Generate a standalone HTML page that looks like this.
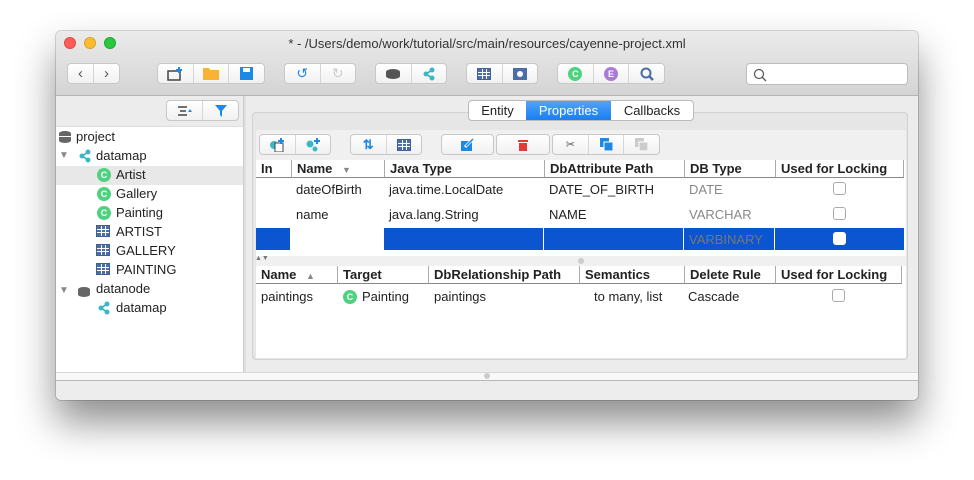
<!DOCTYPE html>
<html><head><style>
*{box-sizing:border-box;margin:0;padding:0}
body{width:974px;height:480px;background:#fff;position:relative;overflow:hidden;font-family:"Liberation Sans",sans-serif;font-size:13px;color:#222}
.a{position:absolute}
#win{left:56px;top:31px;width:862px;height:369px;border-radius:5px;overflow:hidden;background:#ececec;box-shadow:0 22px 40px rgba(0,0,0,.45),0 0 0 1px rgba(0,0,0,.15)}
#tb{left:0;top:0;width:862px;height:65px;background:linear-gradient(#ebebeb,#d4d4d4);border-bottom:1px solid #b5b5b5}
.dot{width:12px;height:12px;border-radius:50%;top:6px}
.grp{height:21px;top:32px;background:linear-gradient(#fff,#f1f1f1);border:1px solid #c8c8c8;border-radius:4px;display:flex}
.grp>div{flex:1;border-left:1px solid #d6d6d6;display:flex;align-items:center;justify-content:center}
.grp>div:first-child{border-left:none}
.cc{width:14px;height:14px;border-radius:50%;color:#fff;font-size:9px;font-weight:bold;display:flex;align-items:center;justify-content:center}
.cell{position:absolute;white-space:nowrap}
.th{font-weight:bold;height:18px;border-left:1px solid #aaa;padding-left:5px;line-height:18px;border-bottom:1px solid #888}
.cb{width:13px;height:13px;border:1px solid #aaa;border-radius:3px;background:#fff}
.tree div{position:absolute;white-space:nowrap;font-size:13px}
.gi{width:14px;height:12px;background:#4c6ea8;border:1px solid #3e5f98;display:inline-block;background-image:linear-gradient(90deg,transparent 4px,#fff 4px,#fff 5px,transparent 5px,transparent 8px,#fff 8px,#fff 9px,transparent 9px),linear-gradient(transparent 3px,#fff 3px,#fff 4px,transparent 4px,transparent 6px,#fff 6px,#fff 7px,transparent 7px)}
</style></head><body>
<div id="win" class="a">
 <div id="tb" class="a">
  <div class="a dot" style="left:8px;background:#fc5f57;border:1px solid #de4a42"></div>
  <div class="a dot" style="left:28px;background:#fdbc2e;border:1px solid #dea126"></div>
  <div class="a dot" style="left:48px;background:#29c83f;border:1px solid #1fa833"></div>
  <div class="a" style="left:0;width:862px;top:5px;text-align:center;font-size:13px;color:#333">* - /Users/demo/work/tutorial/src/main/resources/cayenne-project.xml</div>
  <div class="a grp" style="left:11px;width:53px"><div style="color:#555;font-size:15px">&#8249;</div><div style="color:#555;font-size:15px">&#8250;</div></div>
  <div class="a grp" style="left:101px;width:108px"><div><svg width="16" height="14"><rect x="1" y="4" width="12" height="9" fill="none" stroke="#444" stroke-width="1.5"/><path d="M12 0v6M9 3h6" stroke="#1e88e5" stroke-width="2"/></svg></div><div><svg width="16" height="13"><path d="M0 1h6l1 2h9v10H0z" fill="#f9b233"/></svg></div><div><svg width="13" height="13"><rect width="13" height="13" fill="#1e88e5"/><rect x="3" y="1" width="7" height="4" fill="#fff"/></svg></div></div>
  <div class="a grp" style="left:228px;width:72px"><div style="color:#1e88e5;font-size:14px">&#8634;</div><div style="color:#ccc;font-size:14px">&#8635;</div></div>
  <div class="a grp" style="left:319px;width:72px"><div><svg width="14" height="10"><ellipse cx="7" cy="3" rx="7" ry="3" fill="#555"/><rect x="0" y="3" width="14" height="4" fill="#555"/><ellipse cx="7" cy="7" rx="7" ry="3" fill="#555"/></svg></div><div><svg width="14" height="14"><path d="M10 3L4 7l6 4" stroke="#3aa" stroke-width="1.5" fill="none"/><circle cx="10" cy="3" r="2.5" fill="#3bb8c8"/><circle cx="4" cy="7" r="2.5" fill="#3bb8c8"/><circle cx="10" cy="11" r="2.5" fill="#3bb8c8"/></svg></div></div>
  <div class="a grp" style="left:410px;width:72px"><div><span class="gi"></span></div><div><svg width="14" height="12"><rect width="14" height="12" fill="#4c6ea8"/><circle cx="7" cy="6" r="3" fill="#fff"/></svg></div></div>
  <div class="a grp" style="left:501px;width:108px"><div><span class="cc" style="background:#4fd27f">C</span></div><div><span class="cc" style="background:#a97bd8">E</span></div><div><svg width="14" height="14"><circle cx="6" cy="6" r="4.5" stroke="#4c6ea8" stroke-width="2" fill="none"/><path d="M9 9l4 4" stroke="#4c6ea8" stroke-width="2.5"/></svg></div></div>
  <div class="a" style="left:690px;top:32px;width:162px;height:22px;background:#fff;border:1px solid #bdbdbd;border-radius:4px"><svg class="a" style="left:6px;top:4px" width="14" height="14"><circle cx="6" cy="6" r="4.5" stroke="#555" stroke-width="1.2" fill="none"/><path d="M9 9l4 4" stroke="#555" stroke-width="1.3"/></svg></div>
 </div>
 <div class="a grp" style="left:110px;top:69px;width:73px"><div><svg width="14" height="10"><path d="M0 1h9M2 5h6M0 9h9" stroke="#444" stroke-width="1.5"/><path d="M10 6l2-3 2 3z" fill="#1e88e5"/></svg></div><div><svg width="12" height="12"><path d="M0 0h12L7 6v6L5 10V6z" fill="#1e88e5"/></svg></div></div>
 <div class="a tree" style="left:0;top:95px;width:187px;height:246px;background:#fff;border-top:1px solid #ddd">
  <div style="left:0;top:39px;width:187px;height:19px;background:#e8e8e8"></div>
  <div style="left:3px;top:4px"><svg width="12" height="12"><ellipse cx="6" cy="2.5" rx="6" ry="2.5" fill="#666"/><rect y="2.5" width="12" height="7" fill="#666"/><ellipse cx="6" cy="9.5" rx="6" ry="2.5" fill="#666"/><path d="M0 5.5h12" stroke="#fff"/></svg></div>
  <div style="left:20px;top:2px">project</div>
  <div style="left:3px;top:23px;color:#888;font-size:10px">&#9660;</div>
  <div style="left:22px;top:22px"><svg width="14" height="14"><path d="M10 3L4 7l6 4" stroke="#3aa" stroke-width="1.5" fill="none"/><circle cx="10" cy="3" r="2.5" fill="#3bb8c8"/><circle cx="4" cy="7" r="2.5" fill="#3bb8c8"/><circle cx="10" cy="11" r="2.5" fill="#3bb8c8"/></svg></div>
  <div style="left:40px;top:21px">datamap</div>
  <div style="left:41px;top:41px"><span class="cc" style="background:#4fd27f">C</span></div><div style="left:60px;top:40px">Artist</div>
  <div style="left:41px;top:60px"><span class="cc" style="background:#4fd27f">C</span></div><div style="left:60px;top:59px">Gallery</div>
  <div style="left:41px;top:79px"><span class="cc" style="background:#4fd27f">C</span></div><div style="left:60px;top:78px">Painting</div>
  <div style="left:40px;top:98px"><span class="gi"></span></div><div style="left:60px;top:97px">ARTIST</div>
  <div style="left:40px;top:117px"><span class="gi"></span></div><div style="left:60px;top:116px">GALLERY</div>
  <div style="left:40px;top:136px"><span class="gi"></span></div><div style="left:60px;top:135px">PAINTING</div>
  <div style="left:3px;top:158px;color:#888;font-size:10px">&#9660;</div>
  <div style="left:22px;top:158px"><svg width="12" height="10"><ellipse cx="6" cy="2.5" rx="6" ry="2.5" fill="#666"/><rect y="2.5" width="12" height="5" fill="#666"/><ellipse cx="6" cy="7.5" rx="6" ry="2.5" fill="#666"/></svg></div>
  <div style="left:40px;top:154px">datanode</div>
  <div style="left:41px;top:174px"><svg width="14" height="14"><path d="M10 3L4 7l6 4" stroke="#3aa" stroke-width="1.5" fill="none"/><circle cx="10" cy="3" r="2.5" fill="#3bb8c8"/><circle cx="4" cy="7" r="2.5" fill="#3bb8c8"/><circle cx="10" cy="11" r="2.5" fill="#3bb8c8"/></svg></div>
  <div style="left:60px;top:173px">datamap</div>
 </div>
 <div class="a" style="left:187px;top:65px;width:3px;height:276px;background:#e0e0e0;border-left:1px solid #ccc"></div>
 <div class="a" style="left:196px;top:81px;width:656px;height:248px;background:#e6e6e6;border:1px solid #d2d2d2;border-radius:4px"></div>
 <div class="a" style="left:412px;top:69px;width:226px;height:21px;border:1px solid #bbb;border-radius:4px;background:#fff;display:flex;font-size:13px;overflow:hidden">
  <div style="width:57px;text-align:center;line-height:19px">Entity</div>
  <div style="width:85px;text-align:center;line-height:19px;background:linear-gradient(#4fa3fb,#1a7ef2);color:#fff">Properties</div>
  <div style="flex:1;text-align:center;line-height:19px">Callbacks</div>
 </div>
 <div class="a" style="left:200px;top:99px;width:650px;height:228px;background:#f0f0f0"></div>
 <div class="a grp" style="left:203px;top:103px;width:72px;height:21px"><div><svg width="16" height="14"><circle cx="5" cy="7" r="4" fill="#3bb8c8"/><rect x="6" y="5" width="8" height="9" fill="#fff" stroke="#444"/><path d="M12 0v6M9 3h6" stroke="#1e88e5" stroke-width="2"/></svg></div><div><svg width="16" height="14"><circle cx="5" cy="6" r="3.5" fill="#3bb8c8"/><circle cx="10" cy="11" r="2.5" fill="#3bb8c8"/><path d="M12 0v6M9 3h6" stroke="#1e88e5" stroke-width="2"/></svg></div></div>
 <div class="a grp" style="left:294px;top:103px;width:72px;height:21px"><div style="color:#1e88e5;font-weight:bold">&#8645;</div><div><span class="gi"></span></div></div>
 <div class="a grp" style="left:385px;top:103px;width:53px;height:21px"><div><svg width="14" height="13"><rect y="3" width="11" height="10" fill="#1e88e5"/><path d="M4 9l8-8" stroke="#fff" stroke-width="3"/><path d="M5 8l7-7" stroke="#1e88e5" stroke-width="1.5"/></svg></div></div>
 <div class="a grp" style="left:440px;top:103px;width:54px;height:21px"><div><svg width="10" height="12"><rect y="1" width="10" height="2" fill="#e53935"/><rect x="1" y="4" width="8" height="8" fill="#e53935"/></svg></div></div>
 <div class="a grp" style="left:496px;top:103px;width:108px;height:21px"><div style="color:#555;font-size:11px">&#9986;</div><div><svg width="13" height="13"><rect width="9" height="9" fill="#1e88e5"/><rect x="4" y="4" width="9" height="9" fill="#1e88e5" stroke="#fff"/></svg></div><div><svg width="13" height="13"><rect width="9" height="9" fill="#ccc"/><rect x="4" y="4" width="9" height="9" fill="#ccc" stroke="#fff"/></svg></div></div>
 <div class="a" style="left:200px;top:129px;width:650px;height:96px;background:#fff"></div>
 <div class="a" style="left:200px;top:129px;height:18px;width:650px">
  <div class="cell th" style="left:0;width:35px;border-left:none">In</div>
  <div class="cell th" style="left:35px;width:93px">Name <span style="color:#888;font-size:9px;margin-left:6px">&#9660;</span></div>
  <div class="cell th" style="left:128px;width:160px">Java Type</div>
  <div class="cell th" style="left:288px;width:140px">DbAttribute Path</div>
  <div class="cell th" style="left:428px;width:91px">DB Type</div>
  <div class="cell th" style="left:519px;width:129px;border-right:1px solid #aaa">Used for Locking</div>
 </div>
 <div class="cell" style="left:240px;top:151px">dateOfBirth</div><div class="cell" style="left:333px;top:151px">java.time.LocalDate</div><div class="cell" style="left:493px;top:151px">DATE_OF_BIRTH</div><div class="cell" style="left:633px;top:151px;color:#888">DATE</div><div class="a cb" style="left:777px;top:151px"></div>
 <div class="cell" style="left:240px;top:176px">name</div><div class="cell" style="left:333px;top:176px">java.lang.String</div><div class="cell" style="left:493px;top:176px">NAME</div><div class="cell" style="left:633px;top:176px;color:#888">VARCHAR</div><div class="a cb" style="left:777px;top:176px"></div>
 <div class="a" style="left:200px;top:197px;width:648px;height:22px;background:#0b55d0"></div>
 <div class="a" style="left:234px;top:197px;width:94px;height:22px;background:#fff"></div>
 <div class="a" style="left:487px;top:197px;width:1px;height:22px;background:#fff"></div>
 <div class="a" style="left:627px;top:197px;width:1px;height:22px;background:#fff"></div>
 <div class="a" style="left:718px;top:197px;width:1px;height:22px;background:#fff"></div>
 <div class="cell" style="left:633px;top:201px;color:#777">VARBINARY</div><div class="a cb" style="left:777px;top:201px;border-color:#fff"></div>
 <div class="cell" style="left:199px;top:224px;font-size:7px;color:#777">&#9650;&#9660;</div>
 <div class="a" style="left:522px;top:227px;width:6px;height:6px;border-radius:50%;background:#ccc"></div>
 <div class="a" style="left:200px;top:235px;width:650px;height:92px;background:#fff"></div>
 <div class="a" style="left:200px;top:235px;height:18px;width:650px">
  <div class="cell th" style="left:0;width:81px;border-left:none">Name <span style="color:#888;font-size:9px;margin-left:6px">&#9650;</span></div>
  <div class="cell th" style="left:81px;width:91px">Target</div>
  <div class="cell th" style="left:172px;width:151px">DbRelationship Path</div>
  <div class="cell th" style="left:323px;width:105px">Semantics</div>
  <div class="cell th" style="left:428px;width:91px">Delete Rule</div>
  <div class="cell th" style="left:519px;width:127px;border-right:1px solid #aaa">Used for Locking</div>
 </div>
 <div class="cell" style="left:205px;top:258px">paintings</div>
 <div class="a" style="left:287px;top:259px"><span class="cc" style="background:#4fd27f">C</span></div>
 <div class="cell" style="left:306px;top:258px">Painting</div>
 <div class="cell" style="left:378px;top:258px">paintings</div>
 <div class="cell" style="left:538px;top:258px">to many, list</div>
 <div class="cell" style="left:632px;top:258px">Cascade</div>
 <div class="a cb" style="left:776px;top:258px"></div>
 <div class="a" style="left:0;top:341px;width:862px;height:9px;background:#f8f8f8;border-top:1px solid #d8d8d8;border-bottom:1px solid #b8b8b8"></div>
 <div class="a" style="left:428px;top:342px;width:6px;height:6px;border-radius:50%;background:#ccc"></div>
 <div class="a" style="left:0;top:350px;width:862px;height:19px;background:#ededed"></div>
</div>
</body></html>
